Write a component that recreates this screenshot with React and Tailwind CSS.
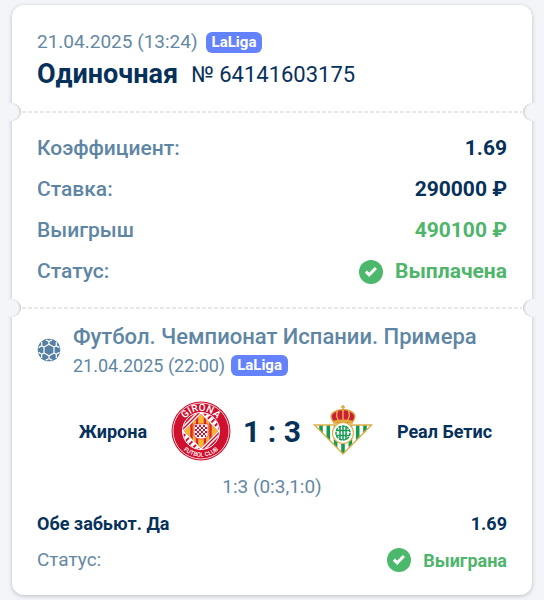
import React from 'react';

const details = [
  { label: 'Коэффициент:', value: '1.69', color: 'text-[#06315a]' },
  { label: 'Ставка:', value: '290000 ₽', color: 'text-[#06315a]' },
  { label: 'Выигрыш', value: '490100 ₽', color: 'text-[#4fb56b]' },
];

function LeagueBadge() {
  return (
    <span className="flex h-[21px] items-center rounded-[6px] bg-[#6482fb] px-[6px] text-[15px] font-bold text-white">
      LaLiga
    </span>
  );
}

function CheckIcon() {
  return (
    <svg viewBox="0 0 24 24" className="size-6 shrink-0" aria-hidden="true">
      <circle cx="12" cy="12" r="12" fill="#4cb86c" />
      <path d="M6.900 11.600l3.300 3.200 6.700-6.800" fill="none" stroke="#fff" strokeWidth="3" />
    </svg>
  );
}

function BallIcon() {
  return (
    <svg viewBox="0 0 24 24" className="size-6 shrink-0" aria-hidden="true">
      <defs>
        <clipPath id="ball-clip">
          <circle cx="12" cy="12" r="11.5" />
        </clipPath>
      </defs>
      <g clipPath="url(#ball-clip)">
        <circle cx="12" cy="12" r="11.5" fill="#5580a1" />
        <g fill="none" stroke="#fff" strokeWidth="1.2">
          <path d="M12 6.200l5 2.900v5.800l-5 2.900-5-2.900V9.100z" />
          {[0, 60, 120, 180, 240, 300].map((angle) => (
            <path key={angle} transform={`rotate(${angle} 12 12)`} d="M12 6.200V3.600M8.800 1.700L12 3.600l3.200-1.900" />
          ))}
        </g>
      </g>
    </svg>
  );
}

function GironaCrest() {
  return (
    <svg viewBox="0 0 60 60" className="size-[60px] shrink-0" role="img" aria-label="Girona">
      <defs>
        <path id="girona-top" d="M10 30a20 20 0 0 1 40 0" />
        <path id="girona-bottom" d="M4.200 30a25.800 25.800 0 0 0 51.600 0" />
        <clipPath id="girona-circle">
          <circle cx="30" cy="30" r="18" />
        </clipPath>
        <clipPath id="girona-diamond">
          <path d="M30 13l17 17-17 17-17-17z" />
        </clipPath>
      </defs>
      <circle cx="30" cy="30" r="29.500" fill="#d0102f" />
      <circle cx="30" cy="30" r="28" fill="none" stroke="#fff" strokeWidth="0.800" />
      <circle cx="30" cy="30" r="18.500" fill="#d0102f" stroke="#fff" strokeWidth="1" />
      <g clipPath="url(#girona-circle)" fill="none" stroke="#fff">
        <path d="M32 10l18 18M10 32l18 18" strokeWidth="5" strokeDasharray="3 2" />
        <path d="M10 28l18-18M32 50l18-18" strokeWidth="1.500" />
      </g>
      <g clipPath="url(#girona-diamond)">
        <path d="M10 10h40v40H10z" fill="#f7b531" />
        <path d="M20.500 10v40M26 10v40M34 10v40M39.500 10v40" stroke="#d8282e" strokeWidth="2.400" />
      </g>
      <path d="M30 12l18 18-18 18-18-18z" fill="none" stroke="#fff" strokeWidth="1.300" />
      <path d="M23 23h14v12q-2 3-7 3t-7-3z" fill="#fff" stroke="#d0102f" strokeWidth="0.600" />
      <path d="M24 25h12M24 29h12M24 33h12" stroke="#d0102f" strokeWidth="2" strokeDasharray="2 2" />
      <path d="M26 27h10M26 31h10M26 35h9" stroke="#d0102f" strokeWidth="2" strokeDasharray="2 2" />
      <text fill="#fff" className="font-['Roboto'] text-[10px] font-medium">
        <textPath href="#girona-top" startOffset="50%" textAnchor="middle">GIRONA</textPath>
      </text>
      <text fill="#fff" className="font-['Roboto'] text-[6px] font-medium">
        <textPath href="#girona-bottom" startOffset="50%" textAnchor="middle">FUTBOL CLUB</textPath>
      </text>
    </svg>
  );
}

function BetisCrest() {
  return (
    <svg viewBox="0 0 60 60" className="size-[60px] shrink-0" role="img" aria-label="Real Betis">
      <defs>
        <clipPath id="betis-shield">
          <path d="M1 24h58L30 53z" />
        </clipPath>
      </defs>
      <path d="M1 24h58L30 53z" fill="#fff" />
      <path
        d="M8 24v30M15.300 24v30M22.600 24v30M30 24v30M37.400 24v30M44.700 24v30M52 24v30"
        stroke="#159a50"
        strokeWidth="3.600"
        clipPath="url(#betis-shield)"
      />
      <path d="M1.500 24h57L30 53z" fill="none" stroke="#deb04c" strokeWidth="1.500" />
      <path d="M21 22l-2.500-4.500c-2-5 4.500-9 11.500-9s13.500 4 11.500 9L39 22z" fill="#c9203a" stroke="#dca43a" strokeWidth="1.400" />
      <path d="M30 9v11M24.500 10q-2 5 1 9.500M35.500 10q2 5-1 9.500" fill="none" stroke="#eebb45" strokeWidth="1.300" />
      <path d="M20.500 21q9.500-2.500 19 0" fill="none" stroke="#e6ac3a" strokeWidth="2.400" />
      <path d="M30 4v5M28 6h4" stroke="#dca43a" strokeWidth="1.400" />
      <circle cx="30" cy="32" r="10.500" fill="#fff" stroke="#deb04c" strokeWidth="1.200" />
      <g fill="none" stroke="#159a50" strokeWidth="1.500">
        <circle cx="30" cy="32" r="7" strokeDasharray="3 1" />
        <path d="M27 25v14M30 25v14M33 25v14M23 29.500h14M23 34.500h14" />
      </g>
    </svg>
  );
}

// Perforated line with a notch cut into each side of the ticket
function Perforation() {
  return (
    <div className="relative flex h-[2px] items-center px-[10px]">
      <span className="absolute top-1/2 -left-1 h-[18px] w-[13px] -translate-y-1/2 rounded-r-[9px] bg-[#f4f5f9] shadow-[inset_-2px_0_2px_-1px_#c4c5c9]" />
      <span className="h-[2px] w-full bg-[repeating-linear-gradient(90deg,#e8e8e8_0_4px,transparent_4px_6px)]" />
      <span className="absolute top-1/2 -right-1 h-[18px] w-[13px] -translate-y-1/2 rounded-l-[9px] bg-[#f4f5f9] shadow-[inset_2px_0_2px_-1px_#c4c5c9]" />
    </div>
  );
}

function App() {
  return (
    <div className="min-h-screen bg-[#f4f5f9] px-3 py-[5px] font-['Roboto','Noto_Sans',sans-serif] text-[#06315a]">
      <main className="rounded-xl bg-white shadow-[0_1px_4px_#b9bbc2]">
        <header className="px-[25px] pt-[25px] pb-4">
          <div className="flex h-6 items-center gap-2">
            <time className="text-[19px] text-[#6488a3]">21.04.2025 (13:24)</time>
            <LeagueBadge />
          </div>
          <div className="flex h-[41px] items-center gap-[13px]">
            <h1 className="text-[27px] font-bold">Одиночная</h1>
            <span className="text-[22px]">№ 64141603175</span>
          </div>
        </header>

        <Perforation />

        <dl className="px-[25px] py-[15px] text-[21px]">
          {details.map((row) => (
            <div key={row.label} className="flex h-[41px] items-center justify-between">
              <dt className="font-medium text-[#5e86a4]">{row.label}</dt>
              <dd className={`font-bold ${row.color}`}>{row.value}</dd>
            </div>
          ))}
          <div className="flex h-[41px] items-center justify-between">
            <dt className="font-medium text-[#5e86a4]">Статус:</dt>
            <dd className="flex items-center gap-3 font-bold text-[#4fb56b]">
              <CheckIcon />
              Выплачена
            </dd>
          </div>
        </dl>

        <Perforation />

        <section className="px-[25px] pt-3 pb-4">
          <div className="flex items-center gap-3">
            <BallIcon />
            <div>
              <h2 className="flex h-[30px] items-center text-[22px] font-medium text-[#5e86a4]">
                Футбол. Чемпионат Испании. Примера
              </h2>
              <div className="flex h-7 items-center gap-[6px]">
                <time className="text-[18px] text-[#5e86a4]">21.04.2025 (22:00)</time>
                <LeagueBadge />
              </div>
            </div>
          </div>

          <div className="mt-[22px] grid grid-cols-[1fr_auto_1fr] items-center text-[18px] font-bold">
            <div className="flex items-center justify-end gap-6">
              <span>Жирона</span>
              <GironaCrest />
            </div>
            <span className="px-3 text-[30px]">1 : 3</span>
            <div className="flex items-center gap-6">
              <BetisCrest />
              <span>Реал Бетис</span>
            </div>
          </div>

          <p className="mt-[14px] text-center text-[19px] leading-6 text-[#6488a3]">1:3 (0:3,1:0)</p>

          <div className="mt-[6px] flex h-9 items-center justify-between text-[18px] font-bold">
            <span>Обе забьют. Да</span>
            <span>1.69</span>
          </div>
          <div className="flex h-[38px] items-center justify-between">
            <span className="text-[19px] text-[#6488a3]">Статус:</span>
            <span className="flex items-center gap-3 text-[18px] font-bold text-[#4fb56b]">
              <CheckIcon />
              Выиграна
            </span>
          </div>
        </section>
      </main>
    </div>
  );
}

export default App;
